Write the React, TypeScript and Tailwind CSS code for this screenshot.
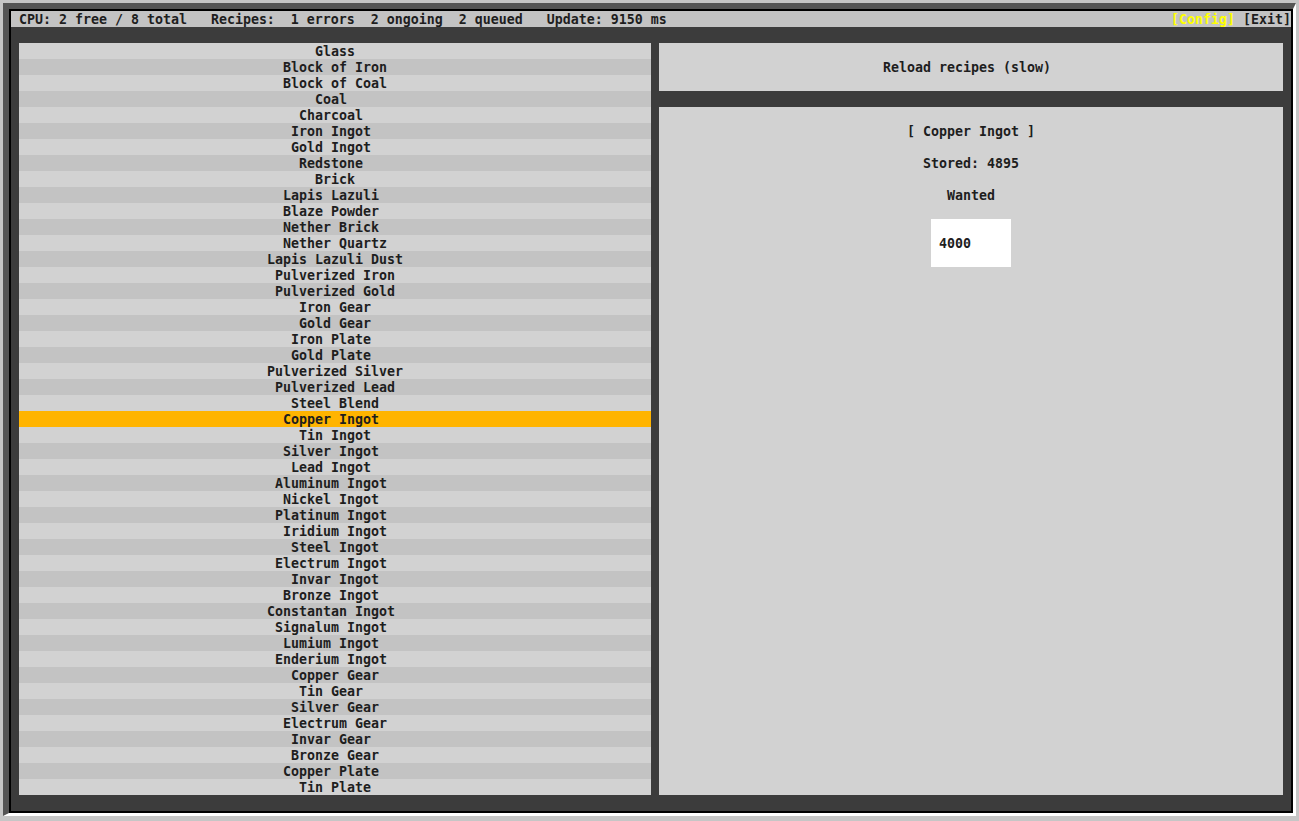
const items = [
  "Glass",
  "Block of Iron",
  "Block of Coal",
  "Coal",
  "Charcoal",
  "Iron Ingot",
  "Gold Ingot",
  "Redstone",
  "Brick",
  "Lapis Lazuli",
  "Blaze Powder",
  "Nether Brick",
  "Nether Quartz",
  "Lapis Lazuli Dust",
  "Pulverized Iron",
  "Pulverized Gold",
  "Iron Gear",
  "Gold Gear",
  "Iron Plate",
  "Gold Plate",
  "Pulverized Silver",
  "Pulverized Lead",
  "Steel Blend",
  "Copper Ingot",
  "Tin Ingot",
  "Silver Ingot",
  "Lead Ingot",
  "Aluminum Ingot",
  "Nickel Ingot",
  "Platinum Ingot",
  "Iridium Ingot",
  "Steel Ingot",
  "Electrum Ingot",
  "Invar Ingot",
  "Bronze Ingot",
  "Constantan Ingot",
  "Signalum Ingot",
  "Lumium Ingot",
  "Enderium Ingot",
  "Copper Gear",
  "Tin Gear",
  "Silver Gear",
  "Electrum Gear",
  "Invar Gear",
  "Bronze Gear",
  "Copper Plate",
  "Tin Plate",
];

const selected = "Copper Ingot";

// terminal-style centering: whole character cells, rounded down
function cellPad(cols: number, text: string) {
  return Math.floor((cols - text.length) / 2) * 8;
}

function Line({ cols, text, className = "" }: { cols: number; text: string; className?: string }) {
  return (
    <div className={`h-4 pt-px whitespace-pre ${className}`} style={{ paddingLeft: cellPad(cols, text) }}>
      {text}
    </div>
  );
}

export default function App() {
  return (
    <div
      className="w-[1299px] h-[821px] bg-[#c6c6c6] p-[3px] text-[#1e1e1e] overflow-hidden"
      style={{ fontFamily: '"DejaVu Sans Mono", "Liberation Mono", monospace' }}
    >
      <div className="w-fit border-l-[6px] border-t-[6px] border-r-[3px] border-b-[3px] border-l-[#555555] border-t-[#555555] border-r-white border-b-white">
        <div className="border-2 border-black">
          <div className="w-[1280px] h-[800px] bg-[#3c3c3c] text-[13.29px] font-bold leading-4">
            {/* status bar */}
            <div className="h-4 pt-px bg-[#c3c3c3] flex justify-between whitespace-pre">
              <span>{" CPU: 2 free / 8 total   Recipes:  1 errors  2 ongoing  2 queued   Update: 9150 ms"}</span>
              <span>
                <span className="text-[#ffff00]">[Config]</span> [Exit]
              </span>
            </div>
            <div className="h-4" />

            <div className="flex gap-2 px-2 h-[752px]">
              {/* recipe list */}
              <div className="w-[632px] flex flex-col">
                {items.map((name, i) => (
                  <Line
                    key={name}
                    cols={79}
                    text={name}
                    className={name === selected ? "bg-[#ffb400]" : i % 2 === 0 ? "bg-[#d2d2d2]" : "bg-[#c3c3c3]"}
                  />
                ))}
              </div>

              {/* right side */}
              <div className="w-[624px] flex flex-col gap-4">
                <div className="h-12 bg-[#d2d2d2] flex items-center">
                  <Line cols={78} text="Reload recipes (slow)" />
                </div>
                <div className="flex-1 bg-[#d2d2d2] py-4 flex flex-col gap-4">
                  <Line cols={78} text="[ Copper Ingot ]" />
                  <Line cols={78} text="Stored: 4895" />
                  <Line cols={78} text="Wanted" />
                  <div className="pl-[272px]">
                    <div className="w-20 h-12 bg-white pl-2 pt-[17px] whitespace-pre">4000</div>
                  </div>
                </div>
              </div>
            </div>
          </div>
        </div>
      </div>
    </div>
  );
}
